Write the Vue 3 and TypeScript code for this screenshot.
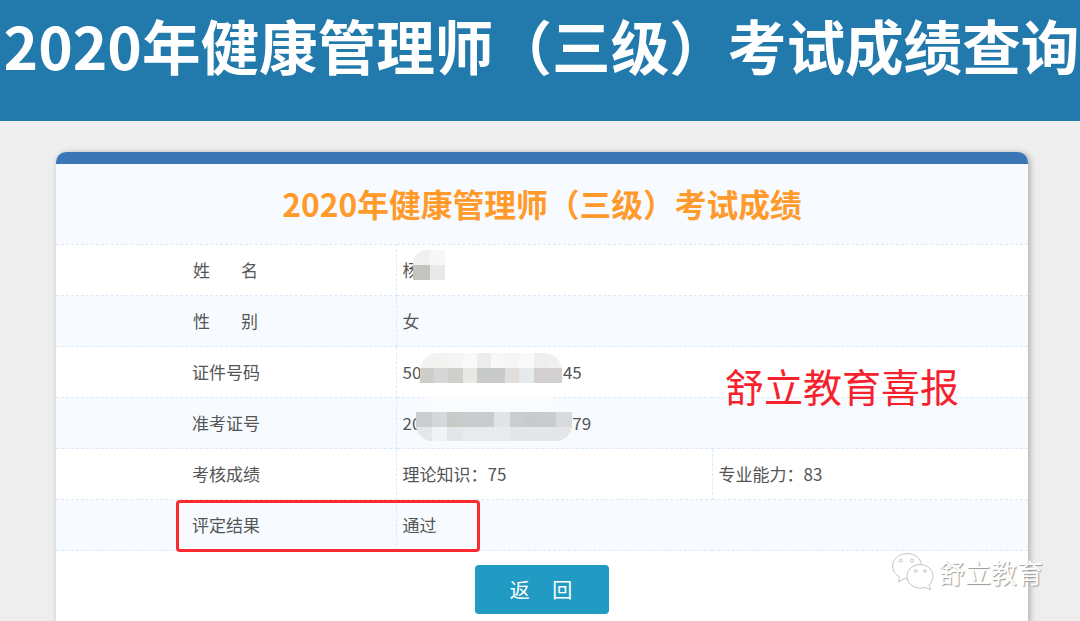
<script setup lang="ts">
interface Row {
  label: string
  value?: string
  second?: string
  gap?: boolean
}

const rows: Row[] = [
  { label: '姓名', value: '杨', gap: true },
  { label: '性别', value: '女', gap: true },
  { label: '证件号码', value: '5000000000000000245' },
  { label: '准考证号', value: '20200000000000000079' },
  { label: '考核成绩', value: '理论知识：75', second: '专业能力：83' },
  { label: '评定结果', value: '通过' },
]

const nameMosaic = ['#f0f0ee', '#f6f7f8', '#c4c3c0', '#e8e9eb']
const idMosaic = [
  '#f3f3f1', '#f3f3f1', '#f5f5f4', '#f9f9f9', '#ececec', '#f8f8f8', '#f6f5f4', '#f9f9f9', '#eeeeee', '#f0f0f0',
  '#cfcdca', '#d5d6d8', '#cfcfcc', '#e9e8e5', '#c9cbca', '#c9cbca', '#e0dfdb', '#e7eaeb', '#d2cfcf', '#d2d0d1',
]
const examMosaic = [
  '#cbcdce', '#d5d8da', '#c9cbc8', '#c9cccc', '#c9cccc', '#e1e4e6', '#cbcecf', '#c9cacc', '#c9cbcd', '#d8dadc',
  '#e4e6e8', '#f0f2f4', '#e3e6e8', '#e8eaec', '#e8eaec', '#e9ebed', '#e4e6e9', '#e4e6e9', '#e4e6e9', '#e4e6e9',
]
</script>

<template>
  <div class="page">
    <header class="banner">
      <h1>2020年健康管理师（三级）考试成绩查询</h1>
    </header>

    <main class="card">
      <div class="card-bar"></div>
      <h2 class="card-title">2020年健康管理师（三级）考试成绩</h2>
      <table class="scores">
        <colgroup>
          <col class="col-label" />
          <col class="col-value" />
          <col class="col-value" />
        </colgroup>
        <tbody>
          <tr v-for="row in rows" :key="row.label">
            <th>
              <span :class="['label', { 'label-gap': row.gap }]">{{ row.label }}</span>
            </th>
            <td :colspan="row.second ? 1 : 2">{{ row.value }}</td>
            <td v-if="row.second">{{ row.second }}</td>
          </tr>
        </tbody>
      </table>
      <div class="actions">
        <button class="back" type="button">返 回</button>
      </div>

      <div class="mosaic mosaic-name">
        <i v-for="(c, i) in nameMosaic" :key="i" :style="{ background: c }"></i>
      </div>
      <div class="mosaic mosaic-id">
        <i v-for="(c, i) in idMosaic" :key="i" :style="{ background: c }"></i>
      </div>
      <div class="mosaic mosaic-exam">
        <i v-for="(c, i) in examMosaic" :key="i" :style="{ background: c }"></i>
      </div>
      <div class="exam-cap"></div>
    </main>

    <div class="red-box"></div>
    <div class="red-note">舒立教育喜报</div>
    <div class="watermark">
      <svg width="42" height="38" viewBox="0 0 42 38" fill="none" stroke="#c4c4c4" stroke-width="1">
        <path d="M15 .6C7 .6.6 6.200.6 13c0 4.600 2.700 8.500 6.900 10.800L6.500 29l5.600-3.300c1 .2 2 .3 3 .3 7.900 0 14.400-5.700 14.400-13S23 .6 15 .6z" fill="#fff" />
        <path d="M28 11.500c-7.200 0-13 5.300-13 11.800s5.800 11.800 13 11.800c1.600 0 3.200-.3 4.600-.8l6 2.500-1.600-5c2.500-2.200 4-5.200 4-8.500 0-6.500-5.800-11.800-13-11.800z" fill="#fff" />
        <circle cx="8.700" cy="7.600" r="1.500" />
        <circle cx="20" cy="7.600" r="1.500" />
        <circle cx="23.700" cy="18" r="1.300" />
        <circle cx="33" cy="18" r="1.300" />
      </svg>
      <span>舒立教育</span>
    </div>
  </div>
</template>

<style scoped>
.page {
  position: relative;
  width: 1080px;
  height: 621px;
  overflow: hidden;
  background: #eeeeee;
  font-family: "Noto Sans CJK SC", "Noto Sans", sans-serif;
  color: #555;
}
.banner {
  height: 121px;
  background: #2279ab;
  box-sizing: border-box;
  padding: 3px 0 0 3px;
  text-align: center;
}
.banner h1 {
  margin: 0;
  color: #fff;
  font-size: 58.600px;
  line-height: 84px;
  font-weight: 700;
  white-space: nowrap;
}
.card {
  position: relative;
  width: 972px;
  margin: 31px 0 0 56px;
  background: #fff;
  border-radius: 10px 10px 0 0;
  box-shadow: 2px 1px 6px rgba(0, 0, 0, 0.28);
}
.card-bar {
  height: 12px;
  background: #3b77b6;
  border-radius: 10px 10px 0 0;
}
.card-title {
  margin: 0;
  height: 80px;
  line-height: 79px;
  background: #f7fbff;
  color: #ff9a2b;
  font-size: 31.750px;
  font-weight: 700;
  text-align: center;
}
.scores {
  width: 972px;
  table-layout: fixed;
  border-collapse: collapse;
  font-size: 17px;
}
.col-label {
  width: 340px;
}
.col-value {
  width: 316px;
}
.scores tr {
  height: 51px;
}
.scores tr:nth-child(even) {
  background: #f7fbff;
}
.scores th,
.scores td {
  padding: 0 0 2px;
  border: 1px dashed #dbe9f9;
  font-weight: 400;
  text-align: left;
  color: #555;
}
.scores tr > :first-child {
  border-left: 0;
}
.scores tr > :last-child {
  border-right: 0;
}
.scores th {
  padding-left: 136px;
}
.scores td {
  padding-left: 6px;
}
.label {
  display: inline-block;
}
.label-gap {
  width: 66px;
  margin-left: 1px;
  letter-spacing: 31px;
  white-space: nowrap;
}
.actions {
  display: flex;
  justify-content: center;
  height: 71px;
  box-sizing: border-box;
  padding-top: 14px;
}
.back {
  width: 134px;
  height: 49px;
  border: 0;
  border-radius: 4px;
  background: #219ac4;
  color: #fff;
  font-family: inherit;
  font-size: 20px;
  word-spacing: 18px;
  padding: 0 2px 0 0;
}
.mosaic {
  position: absolute;
  display: grid;
  overflow: hidden;
}
.mosaic-name {
  left: 357px;
  top: 98px;
  width: 32px;
  height: 30px;
  grid-template-columns: 17px 15px;
  grid-auto-rows: 15px;
  border-top-left-radius: 14px;
}
.mosaic-id {
  left: 364px;
  top: 201px;
  width: 142px;
  height: 30px;
  grid-template-columns: repeat(10, 1fr);
  grid-auto-rows: 15px;
  border-radius: 18px 18px 0 0;
}
.mosaic-exam {
  left: 360px;
  top: 260px;
  width: 156px;
  height: 29px;
  grid-template-columns: repeat(10, 1fr);
  grid-auto-rows: 14.500px;
  border-radius: 0 0 16px 16px;
}
.exam-cap {
  position: absolute;
  left: 372px;
  top: 245px;
  width: 124px;
  height: 15px;
  background: #f9fbfd;
}
.red-box {
  position: absolute;
  left: 176px;
  top: 500px;
  width: 304px;
  height: 52px;
  box-sizing: border-box;
  border: 3px solid #fb2a2d;
  border-radius: 4px;
}
.red-note {
  position: absolute;
  left: 725px;
  top: 357px;
  color: #f5222d;
  font-size: 39px;
  line-height: 56px;
  white-space: nowrap;
}
.watermark {
  position: absolute;
  left: 892px;
  top: 553px;
  display: flex;
  align-items: flex-start;
  gap: 5px;
  color: #fff;
  font-size: 26px;
  line-height: 38px;
  text-shadow: 1px 1px 1px #9a9a9a;
  white-space: nowrap;
}
</style>

<style>
html,
body {
  margin: 0;
  overflow: hidden;
}
</style>
